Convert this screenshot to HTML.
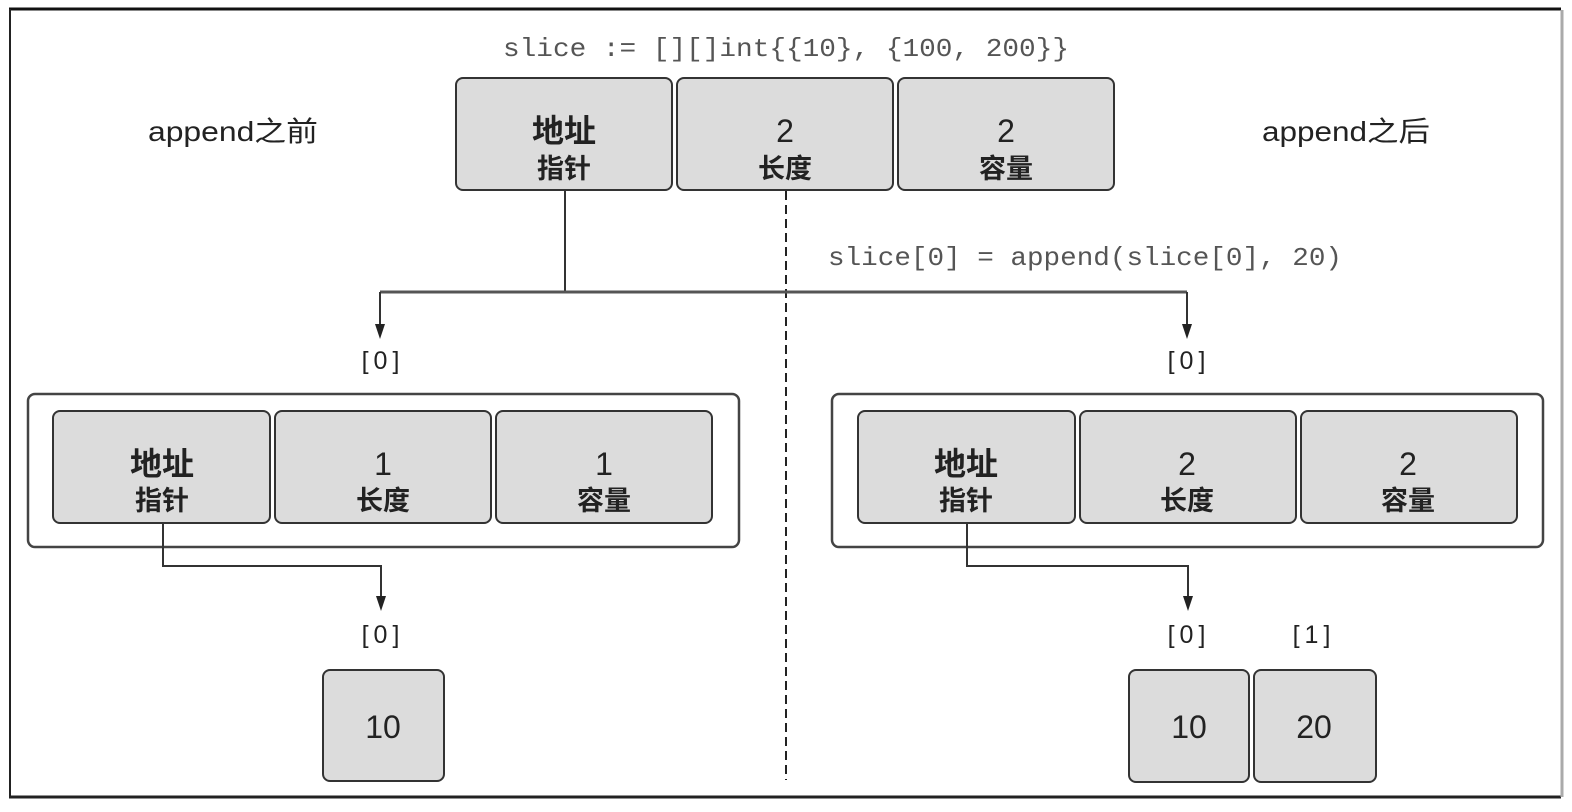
<!DOCTYPE html>
<html><head><meta charset="utf-8"><style>
html,body{margin:0;padding:0;background:#fff;}
svg{display:block;}
.t{font-family:"Liberation Sans","Noto Sans CJK SC",sans-serif;fill:#222;text-anchor:middle;}
.k{font-weight:bold;}
.m{font-family:"Liberation Mono",monospace;fill:#555;}
.b{fill:#dcdcdc;stroke:#333;stroke-width:2;}
.c{fill:none;stroke:#444;stroke-width:2.5;}
.l{fill:none;stroke:#333;stroke-width:2;}
</style></head><body>
<svg width="1572" height="812" viewBox="0 0 1572 812">
<path d="M9,9 H1561" stroke="#111" stroke-width="3"/>
<path d="M9,797 H1561" stroke="#222" stroke-width="3"/>
<path d="M10,9 V797" stroke="#222" stroke-width="2"/>
<path d="M1562,10 V797" stroke="#aaa" stroke-width="3"/>

<text class="m" x="503" y="56" font-size="26" textLength="566" lengthAdjust="spacingAndGlyphs">slice := [][]int{{10}, {100, 200}}</text>
<text class="t" x="233" y="141" font-size="28" textLength="170" lengthAdjust="spacingAndGlyphs">append之前</text>
<text class="t" x="1346" y="141" font-size="28" textLength="168" lengthAdjust="spacingAndGlyphs">append之后</text>

<rect class="b" x="456" y="78" width="216" height="112" rx="7"/>
<rect class="b" x="677" y="78" width="216" height="112" rx="7"/>
<rect class="b" x="898" y="78" width="216" height="112" rx="7"/>
<text class="t k" x="564" y="142" font-size="32">地址</text><text class="t k" x="564" y="178" font-size="27">指针</text>
<text class="t" x="785" y="142" font-size="32">2</text><text class="t k" x="785" y="178" font-size="27">长度</text>
<text class="t" x="1006" y="142" font-size="32">2</text><text class="t k" x="1006" y="178" font-size="27">容量</text>

<path d="M786,191 V780" stroke="#222" stroke-width="2" stroke-dasharray="9,5"/>
<text class="m" x="828" y="265" font-size="26" textLength="514" lengthAdjust="spacingAndGlyphs">slice[0] = append(slice[0], 20)</text>
<path class="l" d="M565,190 V292"/>
<path d="M380,292 H1187" stroke="#555" stroke-width="3"/>
<path class="l" d="M380,292 V326"/>
<path class="l" d="M1187,292 V326"/>
<polygon points="375,324 385,324 380,339" fill="#222"/>
<polygon points="1182,324 1192,324 1187,339" fill="#222"/>
<text class="t" x="383" y="369" font-size="25" letter-spacing="5">[0]</text>
<text class="t" x="1189" y="369" font-size="25" letter-spacing="5">[0]</text>

<rect class="c" x="28" y="394" width="711" height="153" rx="7"/>
<rect class="b" x="53" y="411" width="217" height="112" rx="7"/>
<rect class="b" x="275" y="411" width="216" height="112" rx="7"/>
<rect class="b" x="496" y="411" width="216" height="112" rx="7"/>
<text class="t k" x="162" y="475" font-size="32">地址</text><text class="t k" x="162" y="510" font-size="27">指针</text>
<text class="t" x="383" y="475" font-size="32">1</text><text class="t k" x="383" y="510" font-size="27">长度</text>
<text class="t" x="604" y="475" font-size="32">1</text><text class="t k" x="604" y="510" font-size="27">容量</text>

<rect class="c" x="832" y="394" width="711" height="153" rx="7"/>
<rect class="b" x="858" y="411" width="217" height="112" rx="7"/>
<rect class="b" x="1080" y="411" width="216" height="112" rx="7"/>
<rect class="b" x="1301" y="411" width="216" height="112" rx="7"/>
<text class="t k" x="966" y="475" font-size="32">地址</text><text class="t k" x="966" y="510" font-size="27">指针</text>
<text class="t" x="1187" y="475" font-size="32">2</text><text class="t k" x="1187" y="510" font-size="27">长度</text>
<text class="t" x="1408" y="475" font-size="32">2</text><text class="t k" x="1408" y="510" font-size="27">容量</text>

<path class="l" d="M163,523 V566 H381 V598"/>
<path class="l" d="M967,523 V566 H1188 V598"/>
<polygon points="376,596 386,596 381,611" fill="#222"/>
<polygon points="1183,596 1193,596 1188,611" fill="#222"/>
<text class="t" x="383" y="643" font-size="25" letter-spacing="5">[0]</text>
<text class="t" x="1189" y="643" font-size="25" letter-spacing="5">[0]</text>
<text class="t" x="1314" y="643" font-size="25" letter-spacing="5">[1]</text>

<rect class="b" x="323" y="670" width="121" height="111" rx="7"/>
<text class="t" x="383" y="738" font-size="32">10</text>
<rect class="b" x="1129" y="670" width="120" height="112" rx="7"/>
<rect class="b" x="1254" y="670" width="122" height="112" rx="7"/>
<text class="t" x="1189" y="738" font-size="32">10</text>
<text class="t" x="1314" y="738" font-size="32">20</text>
</svg>
</body></html>
